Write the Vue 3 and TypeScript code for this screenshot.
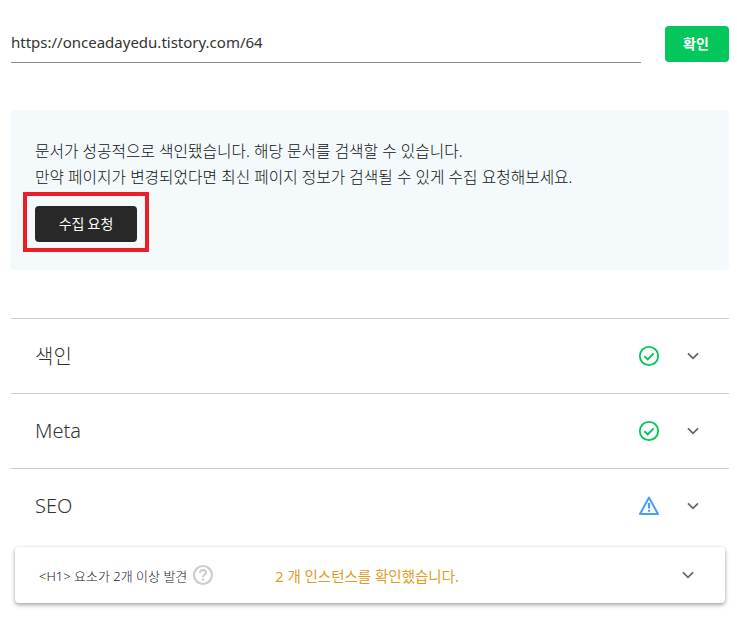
<script setup lang="ts">
interface Row { title: string; status: 'ok' | 'warn' }
const rows: Row[] = [
  { title: '색인', status: 'ok' },
  { title: 'Meta', status: 'ok' },
  { title: 'SEO', status: 'warn' },
]
</script>

<template>
  <main class="page">
    <section class="url-row">
      <div class="url-input">https://onceadayedu.tistory.com/64</div>
      <button class="confirm">확인</button>
    </section>

    <section class="notice">
      <p>문서가 성공적으로 색인됐습니다. 해당 문서를 검색할 수 있습니다.</p>
      <p>만약 페이지가 변경되었다면 최신 페이지 정보가 검색될 수 있게 수집 요청해보세요.</p>
      <div class="request-wrap">
        <button class="request">수집 요청</button>
        <span class="marker"></span>
      </div>
    </section>

    <section class="rows">
      <div v-for="r in rows" :key="r.title" class="row">
        <span class="row-title">{{ r.title }}</span>
        <svg v-if="r.status === 'ok'" class="status" width="22" height="22" viewBox="0 0 22 22" fill="none">
          <circle cx="11" cy="11" r="9.2" stroke="#03c75a" stroke-width="1.8" />
          <path d="M6.4 11.2l3.3 3.2 6-6" stroke="#03c75a" stroke-width="2" />
        </svg>
        <svg v-else class="status" width="22" height="22" viewBox="0 0 22 22" fill="none">
          <path d="M11 2.6L20 19H2Z" stroke="#4a9df8" stroke-width="2" stroke-linejoin="round" />
          <path d="M11 7.8v5.6M11 14.8v2" stroke="#4a9df8" stroke-width="2.2" />
        </svg>
        <svg class="chev" width="12" height="8" viewBox="0 0 12 8" fill="none">
          <path d="M1 1.3l5 5 5-5" stroke="#666" stroke-width="1.8" />
        </svg>
      </div>
    </section>

    <section class="card">
      <span class="card-title">&lt;H1&gt; 요소가 2개 이상 발견</span>
      <svg class="help" width="22" height="22" viewBox="0 0 22 22" fill="none">
        <circle cx="11" cy="11" r="9" stroke="#ccc" stroke-width="2.2" />
        <path d="M8 8.7c0-1.8 1.3-2.8 3-2.8s3 1 3 2.5c0 2.3-3 2.3-3 4.6" stroke="#ccc" stroke-width="2" />
        <path d="M11 14.4v2.2" stroke="#ccc" stroke-width="2.2" />
      </svg>
      <span class="card-msg">2 개 인스턴스를 확인했습니다.</span>
      <svg class="chev card-chev" width="12" height="8" viewBox="0 0 12 8" fill="none">
        <path d="M1 1.3l5 5 5-5" stroke="#666" stroke-width="1.8" />
      </svg>
    </section>
  </main>
</template>

<style>
html, body { background: #fff; }
</style>

<style scoped>
.page {
  box-sizing: border-box;
  width: 737px;
  height: 621px;
  padding: 26px 8px 0 11px;
  overflow: hidden;
  font-family: "Noto Sans", "Noto Sans CJK KR", sans-serif;
  color: #222;
}
.url-row {
  display: flex;
  justify-content: space-between;
  align-items: flex-start;
}
.url-input {
  box-sizing: border-box;
  width: 630px;
  height: 37px;
  line-height: 33px;
  font-size: 15px;
  color: #333;
  border-bottom: 1px solid #8c8c8c;
}
.confirm {
  width: 64px;
  height: 36px;
  padding: 0 2px 2px 0;
  border: 0;
  border-radius: 4px;
  background: #03c75a;
  color: #fff;
  font: 700 14px "Noto Sans CJK KR", sans-serif;
}
.notice {
  box-sizing: border-box;
  height: 160px;
  margin-top: 47px;
  padding: 29px 24px 0;
  background: #f4f9fc;
  border-radius: 4px;
  font-size: 15.75px;
  font-weight: 300;
}
.notice p {
  margin: 0;
  height: 25.5px;
  line-height: 25.5px;
  color: #111;
}
.request-wrap {
  position: relative;
  width: 102px;
  height: 36px;
  margin-top: 16px;
}
.request {
  display: block;
  width: 102px;
  height: 36px;
  padding: 0 0 2px;
  border: 0;
  border-radius: 4px;
  background: #282828;
  color: #fff;
  font: 400 14px "Noto Sans CJK KR", sans-serif;
}
.marker {
  position: absolute;
  left: -12px;
  top: -14px;
  width: 126px;
  height: 60px;
  box-sizing: border-box;
  border: 4px solid #ee1c25;
}
.rows {
  margin-top: 48px;
}
.row {
  box-sizing: border-box;
  display: flex;
  align-items: center;
  height: 75px;
  padding: 0 30px 0 24px;
  border-top: 1px solid #ccc;
}
.row-title {
  flex: 1;
  margin-bottom: 2px;
  font-size: 20px;
  font-weight: 300;
  color: #333;
}
.status {
  margin-right: 27px;
}
.card {
  display: flex;
  align-items: center;
  height: 56px;
  margin: 4px 4px 0;
  padding: 0 31px 0 24px;
  background: #fff;
  border-radius: 4px;
  box-shadow: 0 2px 4px rgba(0, 0, 0, 0.35), 0 0 3px rgba(0, 0, 0, 0.06);
}
.card-title {
  font-size: 13px;
  font-weight: 300;
  color: #222;
}
.help {
  margin-left: 5px;
}
.card-msg {
  margin-left: 61px;
  font-size: 14.5px;
  color: #e09d26;
}
.card-chev {
  margin-left: auto;
}
</style>
